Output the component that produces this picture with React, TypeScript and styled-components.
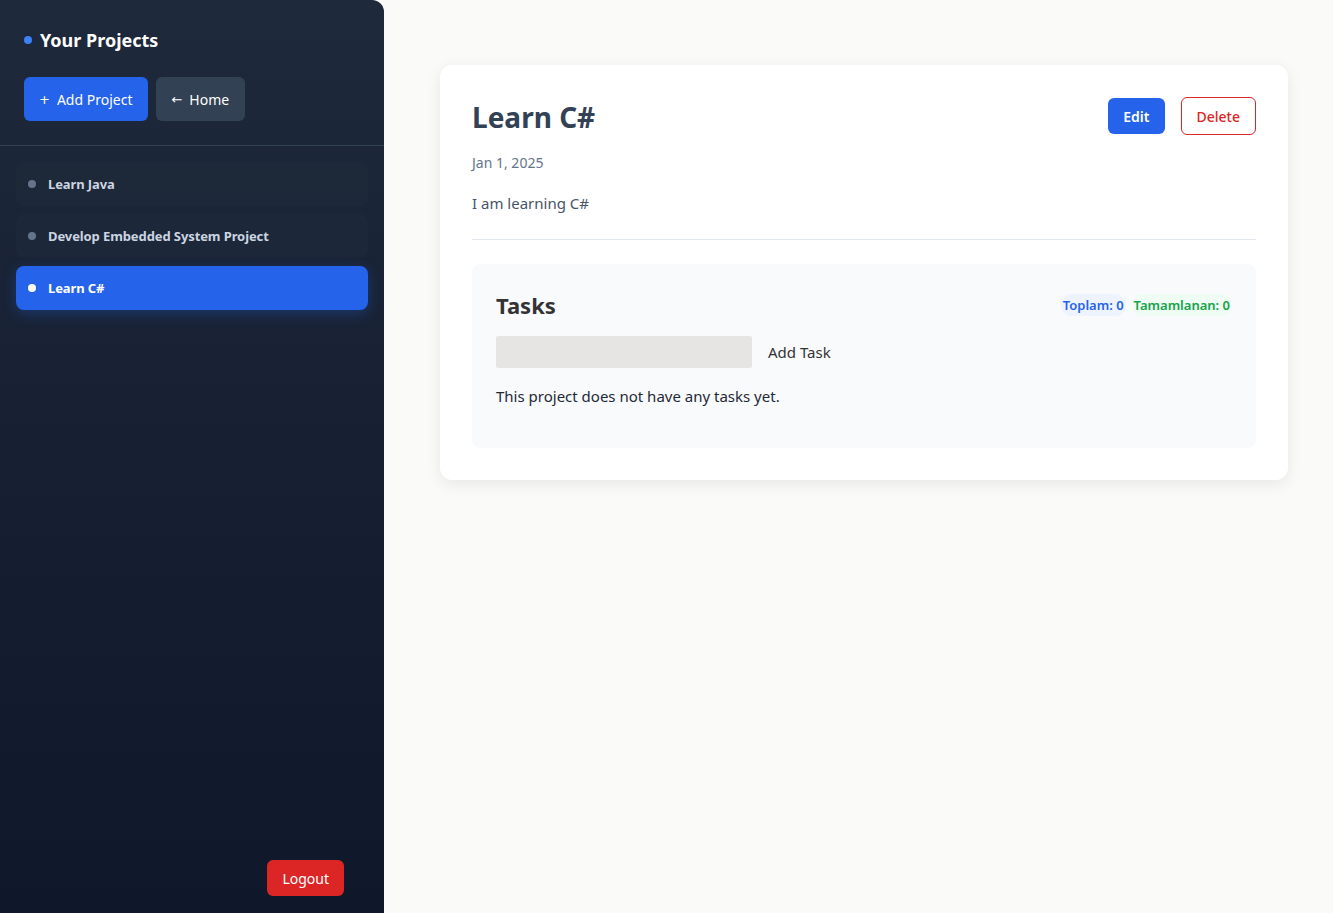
import React from "react";
import styled, { createGlobalStyle } from "styled-components";

const GlobalStyle = createGlobalStyle`
  html, body {
    margin: 0;
    padding: 0;
    background: #fafaf9;
    font-family: "Noto Sans", "Open Sans", Arial, sans-serif;
  }
  * {
    box-sizing: border-box;
  }
`;

const Layout = styled.div`
  display: flex;
  min-height: 100vh;
`;

const Sidebar = styled.aside`
  width: 384px;
  min-height: 100vh;
  display: flex;
  flex-direction: column;
  background: linear-gradient(180deg, #1e293b 0%, #0f172a 100%);
  border-top-right-radius: 12px;
`;

const SidebarHeader = styled.div`
  padding: 25px 24px 24px;
  border-bottom: 1px solid #334155;
`;

const SidebarTitle = styled.h2`
  display: flex;
  align-items: center;
  gap: 8px;
  margin: 1px 0 23px;
  font-size: 18px;
  font-weight: 700;
  color: #ffffff;
  line-height: 28px;
`;

const TitleDot = styled.span`
  width: 8px;
  height: 8px;
  border-radius: 50%;
  background: #3b82f6;
`;

const ButtonRow = styled.div`
  display: flex;
  gap: 8px;
`;

const SideButton = styled.button<{ $primary?: boolean }>`
  display: flex;
  align-items: center;
  gap: 7px;
  height: 44px;
  padding: 0 16px 0 15px;
  border: none;
  border-radius: 6px;
  font-family: inherit;
  font-size: 14px;
  color: #ffffff;
  background: ${(p) => (p.$primary ? "#2563eb" : "#334155")};
  cursor: pointer;
`;

const Glyph = styled.span`
  font-family: "DejaVu Sans", sans-serif;
  font-size: 13px;
  line-height: 1;
`;

const ProjectList = styled.ul`
  list-style: none;
  margin: 0;
  padding: 16px 16px;
  display: flex;
  flex-direction: column;
  gap: 8px;
  flex: 1;
`;

const ProjectItem = styled.li<{ $active?: boolean }>`
  display: flex;
  align-items: center;
  gap: 12px;
  height: 44px;
  padding: 0 12px;
  border-radius: 8px;
  font-size: 13px;
  font-weight: 700;
  letter-spacing: -0.1px;
  color: ${(p) => (p.$active ? "#ffffff" : "#cbd5e1")};
  background: ${(p) => (p.$active ? "#2563eb" : "rgba(30, 41, 59, 0.7)")};
  box-shadow: ${(p) =>
    p.$active ? "0 4px 14px rgba(37, 99, 235, 0.3)" : "none"};
`;

const ItemDot = styled.span<{ $active?: boolean }>`
  width: 8px;
  height: 8px;
  border-radius: 50%;
  background: ${(p) => (p.$active ? "#ffffff" : "#64748b")};
`;

const SidebarFooter = styled.div`
  display: flex;
  justify-content: flex-end;
  padding: 0 40px 17px;
`;

const LogoutButton = styled.button`
  height: 36px;
  padding: 0 15px;
  border: none;
  border-radius: 6px;
  background: #dc2626;
  color: #ffffff;
  font-family: inherit;
  font-size: 14px;
  cursor: pointer;
`;

const Main = styled.main`
  flex: 1;
  padding: 65px 45px 0 56px;
`;

const Card = styled.section`
  background: #ffffff;
  border-radius: 12px;
  box-shadow: 0 4px 16px rgba(0, 0, 0, 0.08);
  padding: 32px;
`;

const CardHeader = styled.div`
  display: flex;
  justify-content: space-between;
  align-items: flex-start;
`;

const ProjectTitle = styled.h1`
  margin: 0;
  font-size: 28px;
  line-height: 40px;
  font-weight: 700;
  color: #334155;
`;

const Actions = styled.div`
  display: flex;
  align-items: center;
  gap: 16px;
`;

const EditButton = styled.button`
  height: 36px;
  padding: 0 15px;
  border: none;
  border-radius: 6px;
  background: #2563eb;
  color: #ffffff;
  font-family: inherit;
  font-size: 14px;
  font-weight: 600;
`;

const DeleteButton = styled.button`
  height: 38px;
  padding: 0 15px;
  border: 1px solid #dc2626;
  border-radius: 6px;
  background: #ffffff;
  color: #dc2626;
  font-family: inherit;
  font-size: 14px;
  font-weight: 500;
`;

const DateText = styled.p`
  margin: 16px 0 0;
  font-size: 14px;
  line-height: 20px;
  color: #64748b;
`;

const Description = styled.p`
  margin: 20px 0 0;
  font-size: 15px;
  line-height: 20px;
  color: #475569;
`;

const Divider = styled.hr`
  margin: 26px 0 24px;
  border: none;
  border-top: 1px solid #e2e8f0;
`;

const TasksBox = styled.div`
  background: #f8fafc;
  border-radius: 8px;
  padding: 26px 24px 42px;
`;

const TasksHeader = styled.div`
  display: flex;
  justify-content: space-between;
  align-items: center;
`;

const TasksTitle = styled.h3`
  margin: 0;
  font-size: 22px;
  line-height: 30px;
  font-weight: 700;
  color: #333333;
`;

const Badges = styled.div`
  display: flex;
  gap: 6px;
`;

const Badge = styled.span<{ $tone: "blue" | "green" }>`
  padding: 2px 2px;
  border-radius: 999px;
  font-size: 13px;
  font-weight: 600;
  color: ${(p) => (p.$tone === "blue" ? "#2563eb" : "#16a34a")};
  background: ${(p) => (p.$tone === "blue" ? "#eef4ff" : "#effcf3")};
`;

const AddRow = styled.div`
  display: flex;
  align-items: center;
  gap: 16px;
  margin-top: 16px;
`;

const TaskInput = styled.input`
  width: 256px;
  height: 32px;
  border: none;
  border-radius: 2px;
  background: #e7e5e4;
  font-family: inherit;
`;

const AddTaskButton = styled.button`
  border: none;
  background: none;
  padding: 0;
  font-family: inherit;
  font-size: 15px;
  color: #333333;
`;

const EmptyText = styled.p`
  margin: 18px 0 0;
  font-size: 15px;
  line-height: 20px;
  color: #1f2937;
`;

const projects = [
  { id: 1, title: "Learn Java" },
  { id: 2, title: "Develop Embedded System Project" },
  { id: 3, title: "Learn C#" },
];

const App = () => {
  const activeId = 3;

  return (
    <>
      <GlobalStyle />
      <Layout>
        <Sidebar>
          <SidebarHeader>
            <SidebarTitle>
              <TitleDot />
              Your Projects
            </SidebarTitle>
            <ButtonRow>
              <SideButton $primary>
                <Glyph>+</Glyph>
                Add Project
              </SideButton>
              <SideButton>
                <Glyph>←</Glyph>
                Home
              </SideButton>
            </ButtonRow>
          </SidebarHeader>
          <ProjectList>
            {projects.map((p) => (
              <ProjectItem key={p.id} $active={p.id === activeId}>
                <ItemDot $active={p.id === activeId} />
                {p.title}
              </ProjectItem>
            ))}
          </ProjectList>
          <SidebarFooter>
            <LogoutButton>Logout</LogoutButton>
          </SidebarFooter>
        </Sidebar>
        <Main>
          <Card>
            <CardHeader>
              <ProjectTitle>Learn C#</ProjectTitle>
              <Actions>
                <EditButton>Edit</EditButton>
                <DeleteButton>Delete</DeleteButton>
              </Actions>
            </CardHeader>
            <DateText>Jan 1, 2025</DateText>
            <Description>I am learning C#</Description>
            <Divider />
            <TasksBox>
              <TasksHeader>
                <TasksTitle>Tasks</TasksTitle>
                <Badges>
                  <Badge $tone="blue">Toplam: 0</Badge>
                  <Badge $tone="green">Tamamlanan: 0</Badge>
                </Badges>
              </TasksHeader>
              <AddRow>
                <TaskInput />
                <AddTaskButton>Add Task</AddTaskButton>
              </AddRow>
              <EmptyText>This project does not have any tasks yet.</EmptyText>
            </TasksBox>
          </Card>
        </Main>
      </Layout>
    </>
  );
};

export default App;
